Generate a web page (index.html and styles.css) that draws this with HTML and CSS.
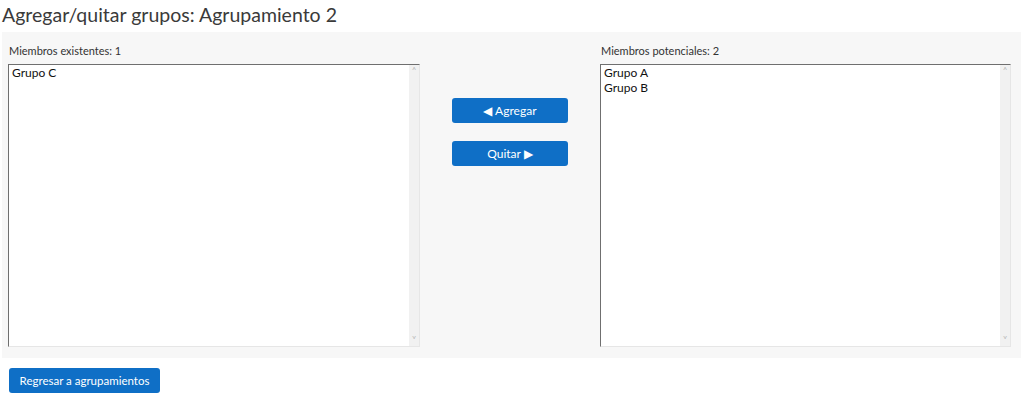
FILE: index.html
```html
<!DOCTYPE html>
<html lang="es">
<head>
<meta charset="utf-8">
<title>Agregar/quitar grupos</title>
<link rel="stylesheet" href="styles.css">
</head>
<body>
<h2 class="page-title">Agregar/quitar grupos: Agrupamiento 2</h2>
<div class="panel">
  <div class="col">
    <label class="lbl">Miembros existentes: 1</label>
    <div class="listbox">
      <div class="items">
        <div class="item">Grupo C</div>
      </div>
      <div class="sbar"><span class="arr">&#708;</span><span class="arr">&#709;</span></div>
    </div>
  </div>
  <div class="mid">
    <button class="btn">&#9664; Agregar</button>
    <button class="btn">Quitar &#9654;</button>
  </div>
  <div class="col">
    <label class="lbl">Miembros potenciales: 2</label>
    <div class="listbox">
      <div class="items">
        <div class="item">Grupo A</div>
        <div class="item">Grupo B</div>
      </div>
      <div class="sbar"><span class="arr">&#708;</span><span class="arr">&#709;</span></div>
    </div>
  </div>
</div>
<div class="footer">
  <button class="btn btn-back">Regresar a agrupamientos</button>
</div>
</body>
</html>
```
FILE: styles.css
```css
html, body {
  margin: 0;
  padding: 0;
  background: #fff;
  font-family: Lato, "Open Sans", sans-serif;
  color: #1d2125;
}
.page-title {
  margin: 0;
  padding: 2px 0 0 2px;
  height: 28px;
  font-size: 19.5px;
  font-weight: 400;
  color: #3a3a3a;
  line-height: 26px;
}
.panel {
  margin: 2px 4px 0 2px;
  background: #f7f7f7;
  display: grid;
  grid-template-columns: 412px 180px 411px;
  padding: 9px 9px 11px 6px;
}
.col {
  display: flex;
  flex-direction: column;
}
.lbl {
  font-size: 11px;
  line-height: 14px;
  color: #333;
  padding: 3px 0 0 1px;
  height: 20px;
}
.listbox {
  display: flex;
  height: 283px;
  background: #fff;
  border-top: 1px solid #6f6f6f;
  border-left: 1px solid #6f6f6f;
  border-right: 1px solid #e6e6e6;
  border-bottom: 1px solid #e6e6e6;
  box-sizing: border-box;
}
.items {
  flex: 1;
  padding: 0 3px;
  font-size: 12px;
  line-height: 15px;
  color: #111;
}
.sbar {
  width: 10px;
  background: #f1f1f1;
  display: flex;
  flex-direction: column;
  justify-content: space-between;
  align-items: center;
  color: #b5b5b5;
  font-size: 9px;
  line-height: 10px;
  padding: 1px 0;
}
.mid {
  display: flex;
  flex-direction: column;
  align-items: center;
  gap: 18px;
  padding-top: 57px;
}
.btn {
  font-family: Lato, "Open Sans", sans-serif;
  background: #0f6fc6;
  color: #fff;
  border: none;
  border-radius: 3px;
  font-size: 12px;
  width: 116px;
  height: 25px;
  padding: 0;
  cursor: pointer;
}
.footer {
  padding: 10px 0 0 9px;
}
.btn-back {
  width: 151px;
  font-size: 11.5px;
}
```
